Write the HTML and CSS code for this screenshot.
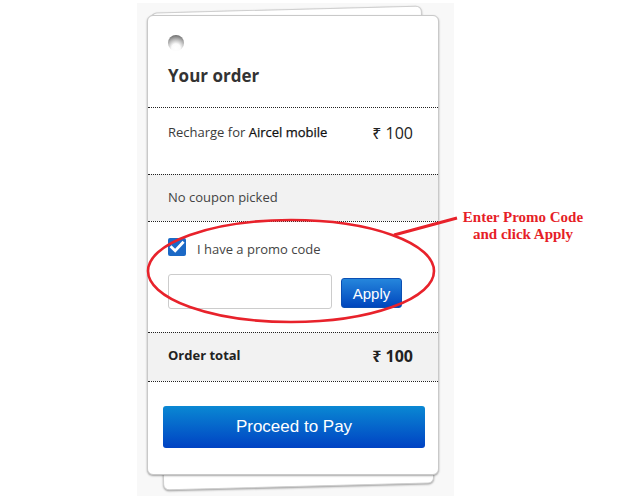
FILE: index.html
```html
<!DOCTYPE html>
<html>
<head>
<meta charset="utf-8">
<link rel="stylesheet" href="styles.css">
</head>
<body>
<div class="stage">
  <div class="card-back"></div>
  <div class="card">
    <div class="header">
      <span class="knob"></span>
      <h2 class="title">Your order</h2>
    </div>
    <div class="sec item">
      <span class="label">Recharge for <b>Aircel mobile</b></span>
      <span class="price">₹ 100</span>
    </div>
    <div class="sec coupon">No coupon picked</div>
    <div class="sec promo">
      <div class="check-row">
        <span class="checkbox"><svg width="18" height="18" viewBox="0 0 18 18"><path d="M3.5 9.2 L7.2 12.8 L14.6 4.8" fill="none" stroke="#fff" stroke-width="2.8" stroke-linecap="square"/></svg></span>
        <span class="check-label">I have a promo code</span>
      </div>
      <div class="promo-row">
        <input class="promo-input" type="text">
        <button class="apply">Apply</button>
      </div>
    </div>
    <div class="sec total">
      <span class="total-label">Order total</span>
      <span class="price bold">₹ 100</span>
    </div>
    <div class="sec pay">
      <button class="proceed">Proceed to Pay</button>
    </div>
  </div>
</div>
<svg class="annot" width="620" height="500" viewBox="0 0 620 500">
  <ellipse cx="291" cy="271" rx="143" ry="51" fill="none" stroke="#e8222b" stroke-width="2.6"/>
  <line x1="394" y1="235" x2="457" y2="218" stroke="#e8222b" stroke-width="3"/>
</svg>
<div class="note">Enter Promo Code<br>and click Apply</div>
</body>
</html>
```
FILE: styles.css
```css
html, body {
  margin: 0;
  padding: 0;
  background: #fff;
}
body {
  width: 620px;
  height: 500px;
  position: relative;
  overflow: hidden;
  font-family: "Open Sans", "Noto Sans", sans-serif;
  color: #333;
}
.stage {
  position: relative;
  margin: 3px 0 0 137px;
  width: 317px;
  height: 493px;
  box-sizing: border-box;
  padding: 12px 0 0 10px;
  background: #f8f8f8;
}
.card-back {
  position: absolute;
  left: 20px;
  top: 6px;
  width: 271px;
  height: 478px;
  background: #fff;
  border: 1px solid #cfcfcf;
  border-radius: 6px;
  box-sizing: border-box;
  box-shadow: 0 1px 2px rgba(0,0,0,0.35);
  transform: rotate(-1.5deg);
}
.card {
  position: relative;
  width: 292px;
  height: 460px;
  box-sizing: border-box;
  background: #fff;
  border: 1px solid #c9c9c9;
  border-radius: 6px;
  box-shadow: 0 1px 2px rgba(0,0,0,0.35);
  display: flex;
  flex-direction: column;
}
.header {
  height: 91px;
  box-sizing: border-box;
  padding: 19px 20px 0 20px;
}
.knob {
  display: block;
  width: 16px;
  height: 16px;
  border-radius: 50%;
  background: radial-gradient(circle at 50% 82%, #fff 0%, #fbfbfb 28%, #b5b5b5 58%, #5a5a5a 92%, #6a6a6a 100%);
}
.title {
  margin: 13px 0 0 0;
  font-size: 17px;
  line-height: 23px;
  font-weight: 700;
  color: #333;
}
.sec {
  border-top: 1px dotted #222;
  box-sizing: border-box;
  font-size: 13px;
  line-height: 18px;
}
.item {
  height: 67px;
  padding: 13px 25px 0 20px;
  display: flex;
  justify-content: space-between;
}
.item, .total {
  align-items: flex-start;
}
.label {
  color: #3a3a3a;
}
.label b {
  font-weight: 400;
  color: #111;
  -webkit-text-stroke: 0.25px #111;
}
.label, .total-label {
  margin-top: 2px;
}
.price {
  font-size: 16px;
  line-height: 22px;
  color: #222;
  margin-top: 1px;
}
.price.bold {
  font-weight: 700;
}
.coupon {
  height: 47px;
  padding: 13px 20px 0 20px;
  background: #f2f2f2;
  color: #444;
}
.promo {
  height: 111px;
  padding: 16px 20px 0 20px;
}
.check-row {
  display: flex;
  align-items: center;
  gap: 11px;
  height: 18px;
}
.checkbox {
  width: 18px;
  height: 18px;
  border-radius: 2px;
  background: #1b69c6;
  display: flex;
}
.check-label {
  color: #444;
  margin-top: 4px;
}
.promo-row {
  display: flex;
  align-items: flex-start;
  gap: 9px;
  margin-top: 18px;
}
.promo-input {
  width: 164px;
  height: 35px;
  box-sizing: border-box;
  margin: 0;
  border: 1px solid #cccccc;
  border-radius: 3px;
  background: #fff;
}
.apply {
  margin: 4px 0 0 0;
  width: 61px;
  height: 30px;
  padding: 0;
  box-sizing: border-box;
  border: 1px solid #0b4fb3;
  border-radius: 3px;
  background: linear-gradient(#2586dc, #0046bd);
  color: #fff;
  font-family: "Liberation Sans", Arial, sans-serif;
  font-size: 15px;
}
.total {
  height: 49px;
  padding: 11px 25px 0 20px;
  background: #f2f2f2;
  display: flex;
  justify-content: space-between;
}
.total-label {
  font-weight: 700;
  color: #222;
}
.pay {
  flex: 1;
  padding: 24px 0 0 15px;
}
.proceed {
  width: 262px;
  height: 42px;
  margin: 0;
  padding: 0;
  border: 0;
  border-radius: 3px;
  background: linear-gradient(#0a88d3, #0042c3);
  color: #fff;
  font-family: "Liberation Sans", Arial, sans-serif;
  font-size: 17px;
}
.annot {
  position: absolute;
  left: 0;
  top: 0;
  pointer-events: none;
}
.note {
  position: absolute;
  left: 455px;
  top: 209px;
  width: 136px;
  text-align: center;
  font-family: "Liberation Serif", "Times New Roman", serif;
  font-weight: 700;
  font-size: 15px;
  line-height: 17px;
  color: #e61e27;
}
```
